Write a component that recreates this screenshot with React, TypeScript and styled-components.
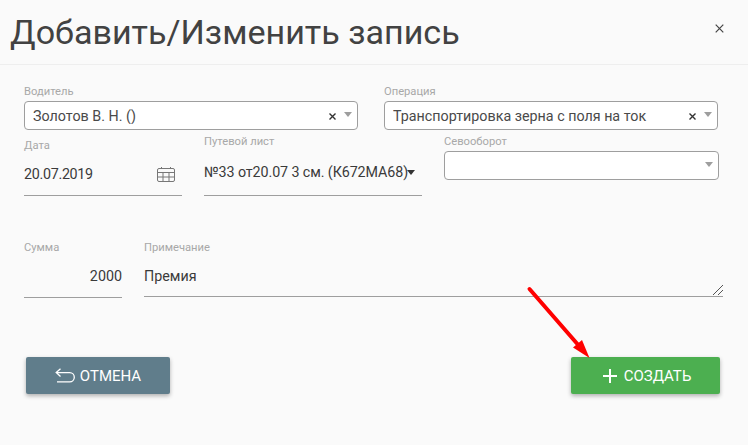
import React from "react";
import styled, { createGlobalStyle } from "styled-components";

const Global = createGlobalStyle`
  html, body { margin: 0; padding: 0; background: #fafafa; }
  body { font-family: Roboto, "Liberation Sans", sans-serif; }
`;
const Dialog = styled.div`
  position: relative; width: 748px; height: 445px; background: #fafafa; overflow: hidden; color: #333;
`;
const Header = styled.header`
  height: 64px; border-bottom: 1px solid #eeeeee; display: flex; justify-content: space-between;
  padding: 0 24px 0 10px;
`;
const Title = styled.h1`
  margin: 12px 0 0; font-size: 34.1px; line-height: 40px; font-weight: 400; color: #424242; white-space: nowrap;
`;
const Close = styled.svg`
  width: 9px; height: 9px; margin-top: 24px;
`;
const Form = styled.div`
  padding: 20px 25px 0 24px; height: 292px; box-sizing: border-box;
`;
const Row = styled.div<{ $h: number }>`
  display: flex; align-items: flex-start; gap: 22px; height: ${p => p.$h}px;
`;
const WideRow = styled(Row)`
  gap: 26px;
`;
const Field = styled.div<{ $w: number; $top?: number }>`
  width: ${p => p.$w}px; flex: none; margin-top: ${p => p.$top ?? 0}px;
`;
const Label = styled.div`
  font-size: 11.2px; line-height: 14px; color: #a8a8a8; white-space: nowrap;
`;
const SelectBox = styled.div`
  height: 29px; margin-top: 2px; border: 1px solid #9e9e9e; border-radius: 4px; background: #fff;
  display: flex; align-items: center; padding: 0 5px 0 8px; font-size: 14.3px; color: #4a4a4a; box-sizing: border-box;
`;
const SelectText = styled.span`
  flex: 1; white-space: nowrap; overflow: hidden;
`;
const Clear = styled.svg`
  width: 7px; height: 7px; margin-right: 8px; flex: none; margin-top: 1px;
`;
const Caret = styled.span<{ $dark?: boolean }>`
  flex: none; width: 0; height: 0; border-left: 4.5px solid transparent; border-right: 4.5px solid transparent;
  border-top: 5px solid ${p => (p.$dark ? "#333" : "#9e9e9e")}; margin-bottom: 2px;
`;
const LineInput = styled.div<{ $h: number; $right?: boolean; $tight?: number }>`
  height: ${p => p.$h}px; border-bottom: 1px solid #9e9e9e; display: flex; align-items: center; font-size: 14.3px; color: #3a3a3a;
  letter-spacing: ${p => p.$tight ?? 0}px;
  justify-content: ${p => (p.$right ? "flex-end" : "space-between")}; white-space: nowrap; box-sizing: border-box;
`;
const CalIcon = styled.svg`
  width: 18px; height: 15px; margin-right: 7px; flex: none;
`;
const PathCaret = styled(Caret)`
  margin: 0 7px 0 -10px;
`;
const Note = styled.div`
  position: relative; height: 42px; border-bottom: 1px solid #9e9e9e; padding-top: 12px; font-size: 14.3px; line-height: 18px; color: #3a3a3a; box-sizing: border-box;
`;
const Grip = styled.svg`
  position: absolute; right: 0; bottom: 1px; width: 10px; height: 10px;
`;
const Footer = styled.footer`
  display: flex; justify-content: space-between; padding: 0 28px 0 26px;
`;
const Button = styled.button<{ $bg: string; $w: number; $shift?: number }>`
  width: ${p => p.$w}px; height: 37px; border: 0; border-radius: 2px; background: ${p => p.$bg}; color: #fff;
  font-family: inherit; font-size: 15px; font-weight: 400; display: flex; align-items: center; justify-content: center;
  padding: 0 0 0 ${p => p.$shift ?? 0}px; box-shadow: 0 2px 4px rgba(0,0,0,.3);
`;
const BtnIcon = styled.svg`
  flex: none; margin-right: 5px;
`;
const PlusIcon = styled(BtnIcon)`
  margin-right: 7px;
`;
const Arrow = styled.svg`
  position: absolute; left: 520px; top: 280px; width: 80px; height: 85px; pointer-events: none;
`;

const ClearX = () => (
  <Clear viewBox="0 0 7 7"><path d="M.5.5l6 6M6.5.5l-6 6" stroke="#333" strokeWidth="1.4" /></Clear>
);

export default function App() {
  return (
    <Dialog>
      <Global />
      <Header>
        <Title>Добавить/Изменить запись</Title>
        <Close viewBox="0 0 9 9"><path d="M.7.7l7.6 7.6M8.3.7L.7 8.3" stroke="#444" strokeWidth="1.2" /></Close>
      </Header>
      <Form>
        <WideRow $h={50}>
          <Field $w={334}>
            <Label>Водитель</Label>
            <SelectBox>
              <SelectText>Золотов В. Н. ()</SelectText>
              <ClearX />
              <Caret />
            </SelectBox>
          </Field>
          <Field $w={334}>
            <Label>Операция</Label>
            <SelectBox>
              <SelectText>Транспортировка зерна с поля на ток</SelectText>
              <ClearX />
              <Caret />
            </SelectBox>
          </Field>
        </WideRow>
        <Row $h={106}>
          <Field $w={158} $top={4}>
            <Label>Дата</Label>
            <LineInput $h={43} $tight={-0.3}>
              20.07.2019
              <CalIcon viewBox="0 0 18 15" fill="none" stroke="#777" strokeWidth="1">
                <rect x=".5" y="1.5" width="17" height="13" rx="1.5" />
                <path d="M.5 5.500h17M.5 10h17M6 5.500v9M12 5.500v9M4.500 0v2M13.500 0v2" />
              </CalIcon>
            </LineInput>
          </Field>
          <Field $w={218}>
            <Label>Путевой лист</Label>
            <LineInput $h={47} $tight={-0.1}>
              №33 от20.07 3 см. (К672МА68)
              <PathCaret $dark />
            </LineInput>
          </Field>
          <Field $w={275}>
            <Label>Севооборот</Label>
            <SelectBox>
              <SelectText />
              <Caret />
            </SelectBox>
          </Field>
        </Row>
        <Row $h={60}>
          <Field $w={98}>
            <Label>Сумма</Label>
            <LineInput $h={43} $right>2000</LineInput>
          </Field>
          <Field $w={579}>
            <Label>Примечание</Label>
            <Note>
              Премия
              <Grip viewBox="0 0 10 10" fill="none" stroke="#555" strokeWidth="1">
                <path d="M0 10L10 0M5 10l5-5" />
              </Grip>
            </Note>
          </Field>
        </Row>
      </Form>
      <Footer>
        <Button $bg="#607d8b" $w={144}>
          <BtnIcon width="20" height="15" viewBox="0 0 20 15" fill="none" stroke="#fff" strokeWidth="1.3">
            <path d="M5.500.7L1.200 4.600l4.300 3.900M1.200 4.600h13.500a4.600 4.600 0 0 1 0 9.200H2" />
          </BtnIcon>
          ОТМЕНА
        </Button>
        <Button $bg="#4caf50" $w={149} $shift={3}>
          <PlusIcon width="14" height="14" viewBox="0 0 14 14" fill="none" stroke="#fff" strokeWidth="2">
            <path d="M7 0v14M0 7h14" />
          </PlusIcon>
          СОЗДАТЬ
        </Button>
      </Footer>
      <Arrow viewBox="0 0 80 85">
        <path d="M9.500 9L60 67" stroke="#ff0000" strokeWidth="4" strokeLinecap="round" fill="none" />
        <path d="M69.500 78L53 67.500L62 60Z" fill="#ff0000" />
      </Arrow>
    </Dialog>
  );
}
